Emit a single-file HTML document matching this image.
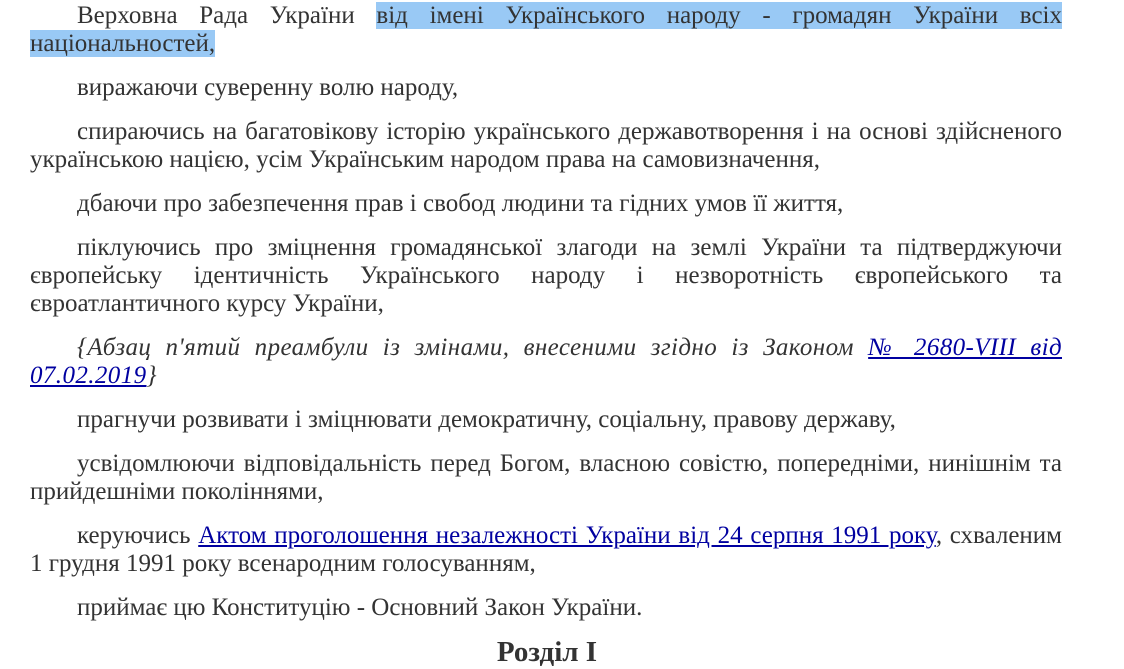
<!DOCTYPE html>
<html><head><meta charset="utf-8"><style>
html,body{margin:0;padding:0;background:#fff;width:1124px;height:665px;overflow:hidden}
body{font-family:"Liberation Serif","Times New Roman",serif;font-size:25px;color:#333;}
.w{position:absolute;left:30px;top:2px;width:1032px}
p{margin:0 0 16px;line-height:28px;text-indent:47px;text-align:justify}
.hl{background:#99c9f5}
a{color:#0000a0;text-decoration:underline}
i{letter-spacing:0.4px}
h2{margin:-3px 0 0;text-align:center;font-size:29px;line-height:34px;font-weight:bold;padding-left:2px}
</style></head><body><div class="w">
<p>Верховна Рада України <span class="hl">від імені Українського народу - громадян України всіх національностей,</span></p>
<p>виражаючи суверенну волю народу,</p>
<p>спираючись на багатовікову історію українського державотворення і на основі здійсненого українською нацією, усім Українським народом права на самовизначення,</p>
<p>дбаючи про забезпечення прав і свобод людини та гідних умов її життя,</p>
<p>піклуючись про зміцнення громадянської злагоди на землі України та підтверджуючи європейську ідентичність Українського народу і незворотність європейського та євроатлантичного курсу України,</p>
<p><i>{Абзац п'ятий преамбули із змінами, внесеними згідно із Законом <a>№ 2680-VIII від 07.02.2019</a>}</i></p>
<p>прагнучи розвивати і зміцнювати демократичну, соціальну, правову державу,</p>
<p>усвідомлюючи відповідальність перед Богом, власною совістю, попередніми, нинішнім та прийдешніми поколіннями,</p>
<p>керуючись <a>Актом проголошення незалежності України від 24 серпня 1991 року</a>, схваленим 1 грудня 1991 року всенародним голосуванням,</p>
<p>приймає цю Конституцію - Основний Закон України.</p>
<h2>Розділ I</h2>
</div></body></html>
